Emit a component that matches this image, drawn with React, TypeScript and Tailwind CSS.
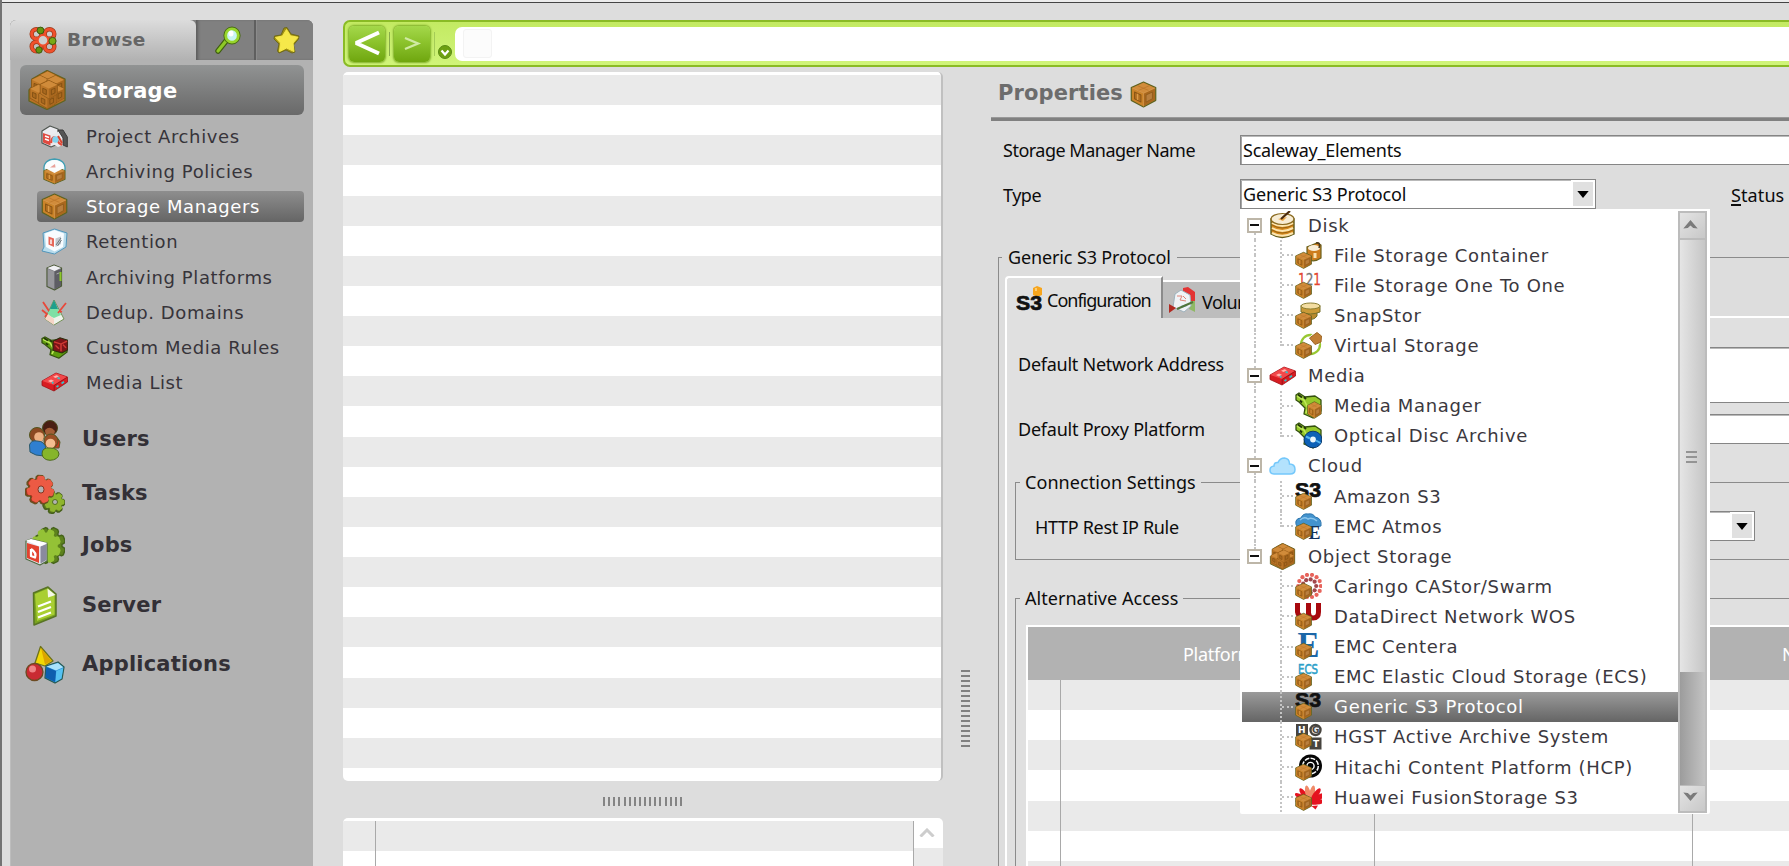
import React from "react";

type IconProps = { className?: string };

const Cube = () => (
  <g strokeLinejoin="round">
    <path d="M13 1 25 6.5V19L13 25.5 1 19V6.5Z" fill="#b87325" stroke="#5f6420" strokeWidth="1.2" />
    <path d="M13 1.8 24.3 6.8 13 12 1.7 6.8Z" fill="#d18c3b" />
    <path d="M1.8 7.3 13 12.5V24.8L1.8 18.7Z" fill="#cb8429" />
    <path d="M24.2 7.3 13 12.5V24.8L24.2 18.7Z" fill="#a9681e" />
    <path d="M4.2 10.8 10.5 13.7V20.7L4.2 17.4Z" fill="#b06e20" stroke="#8a5515" strokeWidth="1" />
    <path d="M7.2 12.5V18.6" stroke="#dc9c48" strokeWidth="1.4" />
    <path d="M21.8 10.8 15.5 13.7V20.7L21.8 17.4Z" fill="#b97f3e" stroke="#8f5a1a" strokeWidth=".8" />
    <path d="M7 4.5 18.5 9.5M19 4.5 7.5 9.5" stroke="#b87328" strokeWidth=".7" />
    <path d="M1.7 6.8 13 12 24.3 6.8M13 12V25" fill="none" stroke="#dca258" strokeWidth=".6" />
  </g>
);

const Crate = ({ className = "size-[27px]" }: IconProps) => (
  <svg viewBox="0 0 26 26.5" className={className}><Cube /></svg>
);

const stack: [number, number][] = [[11.3, 0.3], [3.8, 4.6], [19.2, 4.6], [2.2, 13.6], [19.2, 13.6], [11, 19.2], [12.5, 9.5]];

const Crates = ({ className = "size-[27px]" }: IconProps) => (
  <svg viewBox="0 0 40 40" className={className} strokeLinejoin="round">
    <path d="M20 .5 38 9V30.500L20 39.500 2 31V20L5 17V9Z" fill="#b87024" stroke="#5f6420" strokeWidth="1.3" />
    {stack.map(([x, y]) => (
      <g key={`${x}-${y}`} transform={`translate(${x} ${y}) scale(.72 .76)`}>
        <path d="M13 1 25 6.5V19L13 25.5 1 19V6.5Z" fill="#bd7728" stroke="#8a5515" strokeWidth="1" />
        <path d="M13 1.500 24.500 6.800 13 12 1.500 6.800Z" fill="#d08b3a" />
        <path d="M24.500 7.300 13 12.500V25L24.500 18.800Z" fill="#a8671e" />
        <path d="M4.500 11.500 9.500 13.500V20L4.500 17.500ZM21.500 11.500 16.500 13.500V20L21.500 17.500Z" fill="#a9691f" stroke="#7d4c11" strokeWidth="1.100" />
      </g>
    ))}
  </svg>
);

/** Object icon with a small crate laid over its lower left corner. */
const WithCrate = ({ children }: { children?: React.ReactNode }) => (
  <svg viewBox="0 0 27 27" className="size-[27px]">
    {children}
    <g transform="translate(0 9.6) scale(.66)"><Cube /></g>
  </svg>
);

const S3Text = ({ y = 14, fill = "#111" }: { y?: number; fill?: string }) => (
  <text x="0" y={y} fontFamily="Liberation Sans" fontWeight="700" fontSize="19.5" textLength="26" lengthAdjust="spacingAndGlyphs" fill={fill} stroke={fill} strokeWidth=".7">S3</text>
);

const ProjectArchives = () => (
  <svg viewBox="0 0 27 24" className="h-6 w-[27px]" strokeLinejoin="round">
    <path d="M9 1 17 4V19L10 22 1 18V6Z" fill="#ececf0" stroke="#4f5550" strokeWidth="1.2" />
    <path d="M2 8 9.5 10.5V20.5L2 17.5Z" fill="#e04a40" />
    <path d="M4 11 8 12.5M4 14 8 15.5" stroke="#fff" strokeWidth="1.4" />
    <path d="M10 10 19 6 26 11V22L22 20 17 22 10 18Z" fill="#e9e9ec" />
    <path d="M17 5 22 5 26.3 12V22L22 20V13Z" fill="#555" stroke="#3a3a3a" />
    <path d="M10 18C11 11 14 10 18 18L21 20" stroke="#e44a3a" strokeWidth="2.2" fill="none" />
    <circle cx="14.5" cy="14.5" r="3.2" fill="#7fd3ef" />
    <path d="M17 11 21 18" stroke="#d8442f" strokeWidth="2" />
  </svg>
);

const ArchivingPolicies = () => (
  <svg viewBox="0 0 27 27" className="size-[27px]" strokeLinejoin="round">
    <path d="M3 12Q2 2 13.500 1 25 2 24 12L20 16H7Z" fill="#e4f5fa" stroke="#3f9db2" strokeWidth="1.300" />
    <g transform="translate(2 8) scale(.88 .7)"><Cube /></g>
    <path d="M4 10Q4 3 13.500 2 23 3 23 10L13.500 15Z" fill="#fafcfd" />
    <path d="M9 9.500 14 6 14.500 9.500Z" fill="#e9a19a" />
  </svg>
);

const Retention = () => (
  <svg viewBox="0 0 27 27" className="size-[27px]" strokeLinejoin="round">
    <path d="M13.5 1 26 5 25 19 13.5 26 1 23 3 19 2 5Z" fill="#b9dcec" stroke="#5296bb" strokeWidth="1" />
    <path d="M13.5 2 23 5.5 22 19 13.5 23.5 5 19 4 5.5Z" fill="#f8fcff" />
    <path d="M7.5 8.5 13 10.5V19L7.5 16.5Z" fill="#e6685a" />
    <path d="M10 11.5V16" stroke="#fff" strokeWidth="1.4" />
    <path d="M14.5 10.5 20 8.5V16L14.5 19Z" fill="#c3c9cf" />
    <path d="M15 17 20 10M16.5 18 20.5 12" stroke="#6e7a80" />
  </svg>
);

const Platforms = () => (
  <svg viewBox="0 0 27 27" className="size-[27px]" strokeLinejoin="round">
    <path d="M13 1 20.5 4V22L13.5 26 6 22.5V4Z" fill="#7d7d82" stroke="#4b5a36" strokeWidth="1.2" />
    <path d="M13 1.5 20 4 13.5 7 6.5 4Z" fill="#f1f1f4" />
    <path d="M6.7 5 13.5 7.6V25L6.7 22Z" fill="#97979c" />
    <path d="M13.5 7.6 20 5V21.7L13.5 25.2Z" fill="#5d5d64" />
    <path d="M15.5 10 18.5 8.8" stroke="#a9a9a9" />
    <path d="M19.5 8V17" stroke="#8cc82a" strokeWidth="2" />
  </svg>
);

const Dedup = () => (
  <svg viewBox="0 0 27 27" className="size-[27px]" strokeLinejoin="round">
    <path d="M13 1 23 20 13 26 4 20Z" fill="#eef3ea" stroke="#6b8a4c" strokeWidth=".9" />
    <path d="M13 1 8.5 11 17.5 11Z" fill="#1f9f8c" />
    <path d="M9 10 17 10 20 16 13 19 6 16Z" fill="#7fe0a5" />
    <path d="M4 20 7 15 13 20 13 26Z" fill="#f6d5c6" />
    <path d="M2 3 8 12M1 11 6 15 4 18M25 4 17 14M18 12 21 13" stroke="#e8483a" strokeWidth="1.8" fill="none" />
  </svg>
);

const Serpent = ({ dark = false }: { dark?: boolean }) => (
  <g strokeLinejoin="round">
    <path d="M1 3 4 1 10 5 20 4 26 8V19L18 26 9 22 10 16 4 10 1 8Z" fill={dark ? "#5f9d0e" : "#96c92b"} stroke="#33500f" strokeWidth="1.3" />
    <path d="M2 4 9 8 13 16 11 21" stroke="#bfe85a" strokeWidth="1.6" fill="none" />
    <path d="M3 2.500 7 5.500M5 8.500 7 10.500M9 5 11 7" stroke="#22330c" strokeWidth="1.8" />
  </g>
);

const CustomRules = () => (
  <svg viewBox="0 0 27 27" className="h-[23px] w-[27px]" preserveAspectRatio="none">
    <Serpent dark />
    <path d="M12 6 19 2 27 5V16L21 20 12 17Z" fill="#7b1418" stroke="#2a2e0c" strokeWidth="1.2" />
    <path d="M13 7 20 9.500 26 6M20 10V18M14.5 11 18 15M22 10 25 14" stroke="#d23a34" strokeWidth="1.5" fill="none" />
  </svg>
);

const Cassette = () => (
  <svg viewBox="0 0 27 20" className="h-5 w-[27px]" strokeLinejoin="round">
    <path d="M1 9 15 1 26.5 5V10L13 19 1 13.5Z" fill="#d81c22" stroke="#a01217" strokeWidth=".8" />
    <path d="M1.3 9 15 1.3 26 5 13 13Z" fill="#f2484a" />
    <path d="M12 4.7 15.5 3.2 18 4.2 14.5 6ZM7 9 10 7.5 13 8.8 10 10.4Z" fill="#ffb5ae" />
    <path d="M16.5 5.8 18.8 6.6M11 11.2 12.5 10.3M15.5 15 17.5 13.6M20.5 11.5 23 9.8" stroke="#31c5ce" strokeWidth="1.7" />
    <path d="M13.2 13.4V18.6M13.2 13.4 26 5.4" stroke="#8f1014" strokeWidth=".8" />
  </svg>
);

const Users = () => (
  <svg viewBox="0 0 34 41" className="h-[41px] w-[34px]">
    <circle cx="22" cy="8" r="7.5" fill="#4a1f13" stroke="#4b4a1d" />
    <path d="M17 10Q22 5 27 11 26 17 21 17Q17 15 17 10Z" fill="#a45e37" />
    <path d="M17 20Q29 13 32 22L31 28 20 28Z" fill="#c03a22" stroke="#5b5a24" />
    <circle cx="9" cy="15" r="7.5" fill="#8c4a22" stroke="#54551f" />
    <circle cx="11" cy="17" r="4.8" fill="#edb183" />
    <path d="M1.500 25Q3 20 9 21 17 21 18 29L16 36Q7 36 2 32Z" fill="#2f7fd0" stroke="#2d5a6d" />
    <circle cx="23" cy="21" r="7" fill="#9a4f26" stroke="#54551f" />
    <circle cx="22.5" cy="23.500" r="4.800" fill="#f3bd90" />
    <path d="M14 34Q14 27 22 28 30 28 31 34 30 40 22 40.300 15 40 14 34Z" fill="#86b52b" stroke="#4c6a1c" />
  </svg>
);

const gearPath = (cx: number, cy: number, r: number, teeth: number, turn = 0) => {
  const pts: string[] = [];
  for (let i = 0; i < teeth; i++) {
    const a = ((i + turn) / teeth) * Math.PI * 2;
    const s = (Math.PI * 2) / teeth;
    [[-0.4, 0.78], [-0.32, 0.93], [-0.18, 1], [0.18, 1], [0.32, 0.93], [0.4, 0.78]].forEach(([o, k]) => {
      pts.push(`${(cx + Math.cos(a + o * s) * r * k).toFixed(1)} ${(cy + Math.sin(a + o * s) * r * k).toFixed(1)}`);
    });
  }
  return `M${pts.join("L")}Z`;
};

const Tasks = () => (
  <svg viewBox="0 0 40 40" className="size-10" strokeLinejoin="round">
    <path d={gearPath(28.5, 28.5, 11, 7)} fill="#5e7a1a" stroke="#46601a" strokeWidth="1.500" />
    <path d={gearPath(29.5, 28, 10, 7)} fill="#8fb52e" />
    <circle cx="30" cy="28" r="2.500" fill="#b2b2b2" stroke="#52701b" />
    <path d={gearPath(14.5, 16, 14.5, 7, 0.3)} fill="#a3321f" stroke="#68501e" strokeWidth="1.500" />
    <path d={gearPath(15.5, 15.5, 13.8, 7, 0.3)} fill="#ec5a44" />
    <ellipse cx="16" cy="15.5" rx="3" ry="3.600" fill="#b2b2b2" stroke="#8a3421" />
  </svg>
);

const Jobs = () => (
  <svg viewBox="0 0 40 40" className="size-10" strokeLinejoin="round">
    <path d={gearPath(24, 19.500, 18.500, 8, 0.5)} fill="#5d821d" stroke="#45631a" strokeWidth="1.500" transform="translate(4 0) scale(.86 1)" />
    <path d={gearPath(21, 20, 17.5, 8, 0.5)} fill="#94c236" transform="translate(3 0) scale(.86 1)" />
    <path d="M1 15 6 13 22 17 22 35 15 39 1 33Z" fill="#e6e6ee" stroke="#4f6a40" strokeWidth="1.2" />
    <path d="M2 17 14 20.500V37L2 32Z" fill="#e2432f" />
    <path d="M6 23V30L10 31.500Q12 27 6 23" stroke="#fff" strokeWidth="2.300" fill="none" />
    <path d="M15.500 20.500 21.500 18V34L15.500 37.500Z" fill="#8a8a9e" />
    <path d="M1 14.500 6 13 22.500 17 15 20.500Z" fill="#fff" />
  </svg>
);

const Server = () => (
  <svg viewBox="0 0 26 40" className="h-10 w-[26px]" strokeLinejoin="round">
    <path d="M1.500 7 16 1 24 8V30L2 39Z" fill="#7ba51f" stroke="#587425" strokeWidth="1.500" />
    <path d="M3 8 15.500 2.800 22.500 10V28.500L5 35Z" fill="#a9cf33" />
    <path d="M15.500 2.500 16 11.500 23.500 9Z" fill="#f5f8e8" />
    <path d="M6 20.500 19 15.500M6 26 19 21M6 31.500 19 26.500" stroke="#fff" strokeWidth="2.200" />
  </svg>
);

const Applications = () => (
  <svg viewBox="0 0 40 40" className="size-10" strokeLinejoin="round">
    <path d="M15.500 1.500 28 16 20 21 10 18Z" fill="#f2d705" stroke="#6d721c" strokeWidth="1.300" />
    <path d="M16 3 26.500 16 20 19.500Z" fill="#dca400" />
    <path d="M21 21 33 17 39 22 37 34 30 38 20 33Z" fill="#2b8fd6" stroke="#275a52" strokeWidth="1.300" />
    <path d="M21.500 21.500 33 18 38.300 22.300 31 25.500Z" fill="#a9e3fb" />
    <path d="M31.300 26 38.300 23 36.500 33.500 30.300 37Z" fill="#56c2f2" />
    <path d="M21.300 22 31 26 30 37 20.500 32.500Z" fill="#0d5eae" />
    <circle cx="9.500" cy="27" r="8.500" fill="#c92b33" stroke="#6c4a22" strokeWidth="1.300" />
    <circle cx="7.500" cy="24" r="3.500" fill="#ee8386" />
  </svg>
);

const BrowseIcon = () => (
  <svg viewBox="0 0 28 28" className="size-7">
    {["#9c3a1a", "#f0502c"].map((c, i) => (
      <g key={c} fill="none" stroke={c} strokeWidth={i ? 3 : 4.4}>
        <circle cx="7.500" cy="8" r="4.800" /><circle cx="20.500" cy="8" r="4.800" />
        <circle cx="7.500" cy="20.500" r="4.800" /><circle cx="20.500" cy="20.500" r="4.800" />
      </g>
    ))}
    <circle cx="14" cy="14.300" r="5" fill="#cfcfcf" stroke="#f0502c" strokeWidth="1.400" />
    <circle cx="11.500" cy="4.500" r="3.400" fill="#63950f" stroke="#3c5a10" /><circle cx="23.500" cy="15" r="3.600" fill="#79ab17" stroke="#3c5a10" /><circle cx="10" cy="24" r="3.200" fill="#63950f" stroke="#3c5a10" />
  </svg>
);

const SearchIcon = () => (
  <svg viewBox="0 0 26 28" className="h-7 w-[26px]">
    <path d="M11 15 3 25" stroke="#3f5d10" strokeWidth="5.500" strokeLinecap="round" />
    <path d="M11 15 3 25" stroke="#8fc928" strokeWidth="3.200" strokeLinecap="round" />
    <ellipse cx="17" cy="9.500" rx="6.300" ry="6.700" fill="#d2f6f4" stroke="#466810" strokeWidth="4.600" />
    <ellipse cx="17" cy="9.500" rx="6.300" ry="6.700" fill="#c8f4f2" stroke="#98d52c" strokeWidth="2.800" />
    <ellipse cx="16" cy="7.500" rx="2.500" ry="3" fill="#fff" />
  </svg>
);

const StarIcon = () => (
  <svg viewBox="0 0 27 27" className="size-[27px]" strokeLinejoin="round">
    <path d="M11 1 14 .500 18 7 26 9 25.500 12 20.500 18 22 25 19 26 13 23 6 26 4.500 24 6 17 1 12 1.500 9 8 8Z" fill="#a39313" stroke="#6f6a1a" />
    <path d="M13.500 2.500 17.500 8.800 25 10.300 20 16 21 24.500 13.500 21 6.500 24.500 7.500 16 2.500 10.500 9.500 9Z" fill="#f6e84a" stroke="#f6e84a" strokeWidth="1" />
  </svg>
);

const DiskIcon = () => (
  <svg viewBox="0 0 27 28" className="h-7 w-[27px]">
    <path d="M2 8V23Q13 30 25 23V8Z" fill="#d78a1d" stroke="#5c5a1e" strokeWidth="1.400" />
    <path d="M3 12Q13 18 24 12M3 17Q13 23 24 17M3 22Q13 27.500 24 22" stroke="#fbe5b0" strokeWidth="2" fill="none" />
    <path d="M3 14Q13 20 24 14M3 19Q13 25 24 19" stroke="#8a5a10" strokeWidth=".8" fill="none" />
    <ellipse cx="13.500" cy="8" rx="11.500" ry="5.500" fill="#f7ecd4" stroke="#8a6a20" strokeWidth="1.200" />
    <path d="M9 8 18 6 14 10Z" fill="#eaa545" /><path d="M12 8 21 0" stroke="#4b2a0c" strokeWidth="2.200" />
  </svg>
);

const CloudIcon = () => (
  <svg viewBox="0 0 27 18" className="h-[18px] w-[27px]">
    <path d="M5 17Q1 17 1 13 1 9.500 5 9 5 5 9 5.500 11 1 15.500 1 20.500 1.500 20.500 7 26 7 26 12.500 26 17 21 17Z" fill="#b3e2fd" stroke="#74c8fb" strokeWidth="1.500" />
  </svg>
);

const FileContainer = () => (
  <WithCrate>
    <path d="M12 5V17Q19 21 26 16V3L22 1 17 3Z" fill="#cd7d1d" stroke="#6a611e" strokeWidth="1.200" />
    <ellipse cx="19" cy="6" rx="6" ry="3" fill="#f8eed8" /><path d="M21 1Q26 0 24 6" stroke="#4d3a1c" strokeWidth="1.600" fill="none" />
    <path d="M20 11V16" stroke="#fae1ad" strokeWidth="3" />
  </WithCrate>
);
const OneToOne = () => (
  <WithCrate>
    <text x="3" y="12.500" fontFamily="DejaVu Sans" fontSize="15.500" fill="#e3452f" stroke="#e3452f" strokeWidth=".3" textLength="23" lengthAdjust="spacingAndGlyphs"><tspan>1</tspan><tspan fill="#777" stroke="#777">2</tspan><tspan>1</tspan></text>
  </WithCrate>
);
const SnapStor = () => (
  <WithCrate>
    <path d="M11 8V15Q18 20 22 14V9Z" fill="#b98a2d" stroke="#6d6825" />
    <path d="M6 3.500V10Q15 14 25 10V3.500Z" fill="#ca9a38" stroke="#77712a" /><ellipse cx="15.500" cy="4" rx="9.500" ry="3" fill="#f3dda2" stroke="#8c8033" />
  </WithCrate>
);
const Virtual = () => (
  <WithCrate>
    <circle cx="15.500" cy="12.500" r="9.500" fill="none" stroke="#98c832" strokeWidth="2.300" />
    <path d="M12 7 20 0 27 4 24 13 17 13Z" fill="#fff" /><path d="M14.500 6 22 .500 26.500 4 26 10 20 12.500Z" fill="#c17f35" stroke="#9d6726" />
  </WithCrate>
);
const MediaManager = () => (
  <svg viewBox="0 0 27 27" className="size-[27px]"><Serpent /><g transform="translate(12 9) scale(.57 .68)"><Cube /></g></svg>
);
const Optical = () => (
  <svg viewBox="0 0 27 27" className="size-[27px]"><Serpent />
    <ellipse cx="18" cy="17.500" rx="9" ry="8.300" fill="#0d61b7" stroke="#0b3a6b" /><path d="M11 14.500 15 16.500M21 18.500 25.500 21" stroke="#55b5ee" strokeWidth="2" /><circle cx="18" cy="17.500" r="2.900" fill="#eaf6fb" /></svg>
);
const AmazonS3 = () => <WithCrate><S3Text /></WithCrate>;
const Atmos = () => (
  <WithCrate>
    <path d="M4 14Q0 13 1 8 2 5 6 5 8 0 13 1 18 0 20 4 27 5 26 13L20 14Z" fill="#4393ce" stroke="#2d75ad" />
    <path d="M5 7Q9 3 13 6 17 4 22 8" stroke="#8cc6ed" fill="none" strokeWidth="1.500" />
    <text x="13.500" y="26" fontFamily="Liberation Serif" fontWeight="700" fontSize="18" fill="#12325c">E</text>
  </WithCrate>
);
const Caringo = () => {
  const dots: [number, number, string][] = [];
  for (let i = 0; i < 14; i++) dots.push([14.500 + Math.cos((i / 14) * 6.283) * 11.300, 13 + Math.sin((i / 14) * 6.283) * 11.300, "#e7635b"]);
  for (let i = 0; i < 9; i++) dots.push([14.500 + Math.cos((i / 9) * 6.283) * 6.700, 13 + Math.sin((i / 9) * 6.283) * 6.700, "#a2474c"]);
  return <WithCrate>{dots.map(([x, y, c], i) => <circle key={i} cx={x} cy={y} r="2.100" fill={c} />)}</WithCrate>;
};
const Wos = () => (
  <WithCrate><path d="M2.500 0V9Q3 14 10 14M13.500 0V13M13.500 10Q14 15 18 15 23.500 15 23.500 9V0" stroke="#a8090e" strokeWidth="5" fill="none" /></WithCrate>
);
const Centera = () => (
  <WithCrate><text x="2.500" y="24" fontFamily="Liberation Serif" fontWeight="700" fontSize="35" textLength="22" lengthAdjust="spacingAndGlyphs" fill="#1c67a8">E</text></WithCrate>
);
const Ecs = () => (
  <WithCrate><text x="3" y="10.500" fontFamily="DejaVu Sans" fontSize="13.500" textLength="20" lengthAdjust="spacingAndGlyphs" fill="#2d9fc9" stroke="#2d9fc9" strokeWidth=".6">ECS</text></WithCrate>
);
const Hgst = () => (
  <WithCrate>
    <rect x="1" y="1" width="12" height="12" fill="#47443f" /><circle cx="20.500" cy="7" r="5" fill="#eee" stroke="#47443f" strokeWidth="2.400" /><rect x="14.500" y="14.500" width="12" height="12" fill="#47443f" />
    <g fontFamily="DejaVu Sans" fontWeight="700" fontSize="9"><text x="3" y="10" fill="#fff">H</text><text x="17" y="10" fill="#47443f">G</text><text x="18" y="24" fill="#fff">T</text></g>
  </WithCrate>
);
const Hitachi = () => (
  <WithCrate>
    <circle cx="15.500" cy="12" r="11.500" fill="#050505" /><circle cx="15.500" cy="12" r="7.800" fill="none" stroke="#fff" strokeWidth="1.500" strokeDasharray="4.800 1.300" /><circle cx="15.500" cy="12" r="3.600" fill="#050505" stroke="#fff" strokeWidth="1.400" />
  </WithCrate>
);
const Huawei = () => (
  <WithCrate>
    {[-82, -58, -35, -12, 12, 35, 58, 82].map((a) => <ellipse key={a} cx="15" cy="8" rx="2.600" ry="7.800" transform={`rotate(${a} 15 19) translate(${Math.abs(a) > 70 ? "0 4" : "0 1"})`} fill={Math.abs(a) < 20 ? "#f08a68" : "#e5121f"} />)}
    <path d="M16.500 22 23 21.500 20.500 25.500Z" fill="#e5121f" />
  </WithCrate>
);
const ConfigS3 = () => (
  <svg viewBox="0 0 27 27" className="size-[27px]">
    <path d="M17 3 21 1 26 3V10L21 12 17 10Z" fill="#f7a51c" /><path d="M20 3V6" stroke="#fff3c7" />
    <S3Text y={25} />
  </svg>
);
const Volumes = () => (
  <svg viewBox="0 0 27 27" className="size-[27px]">
    <path d="M14 1 19 0 26 5V15H14Z" fill="#e33434" /><path d="M22 14 26 14V25L20 22Z" fill="#8fb965" />
    <path d="M6 7 12 3 21 8 22 19 15 25 4 20Z" fill="#f0f3f6" stroke="#9fb3bd" />
    <path d="M8 9 13 9 11 13 17 14M14 9 17 12" stroke="#e08274" fill="none" /><path d="M12 20 18 18" stroke="#7fb8d8" strokeWidth="2" />
    <path d="M0 17 7 21 0 26Z" fill="#b22a22" /><path d="M8 22 24 15" stroke="#52753b" strokeWidth="2" />
  </svg>
);

const subItems: [string, React.FC<IconProps>][] = [
  ["Project Archives", ProjectArchives],
  ["Archiving Policies", ArchivingPolicies],
  ["Storage Managers", Crate],
  ["Retention", Retention],
  ["Archiving Platforms", Platforms],
  ["Dedup. Domains", Dedup],
  ["Custom Media Rules", CustomRules],
  ["Media List", Cassette],
];

const sections: [string, React.FC, string][] = [
  ["Users", Users, "h-[54px]"],
  ["Tasks", Tasks, "h-[54px]"],
  ["Jobs", Jobs, "h-[50px]"],
  ["Server", Server, "h-[70px]"],
  ["Applications", Applications, "h-[47px]"],
];

const Sidebar = () => (
  <aside className="flex h-[846px] w-[303px] shrink-0 flex-col rounded-t-[6px] bg-[#b2b2b2] font-['DejaVu_Sans',sans-serif] shadow-[inset_1px_0_0_#bdbdbd]">
    <div className="flex h-10 rounded-t-[6px] bg-[#808080]">
      <div className="flex w-[186px] items-center gap-[10px] rounded-t-[6px] bg-linear-to-b from-[#dcdcdc] to-[#b2b2b2] pl-[19px]">
        <BrowseIcon />
        <span className="text-[18.5px] font-bold tracking-[0.35px] text-[#666]">Browse</span>
      </div>
      <div className="flex grow rounded-tr-[6px] bg-[#808080] shadow-[inset_3px_0_3px_-1px_#5c5c5c]">
        <div className="flex w-[60px] items-center justify-center border-r-2 border-[#5f5f5f] pl-[6px]"><SearchIcon /></div>
        <div className="flex grow items-center justify-center border-l border-[#8b8b8b] pl-[2px]"><StarIcon /></div>
      </div>
    </div>
    <div className="mt-[5px] ml-[10px] flex h-[50px] w-[284px] items-center rounded-[6px] bg-linear-to-b from-[#919393] to-[#696969] pl-[7px]">
      <Crates className="size-10" />
      <span className="mt-[3px] ml-[15px] text-[21px] font-bold tracking-[0.3px] text-white">Storage</span>
    </div>
    <ul className="mt-[4px] flex flex-col pl-[27px]">
      {subItems.map(([label, Icon], i) => (
        <li key={label} className="flex h-[35.130px] items-center">
          <div className={"flex h-[31px] w-[267px] items-center rounded-[4px] pl-[4px] " + (i === 2 ? "bg-linear-to-b from-[#8e8e8e] to-[#656565] text-white" : "text-[#37343a]")}>
            <span className="flex w-[27px] justify-center"><Icon /></span>
            <span className="ml-[18px] text-[18px] tracking-[0.6px] whitespace-nowrap">{label}</span>
          </div>
        </li>
      ))}
    </ul>
    <ul className="mt-[13px] flex flex-col pl-[15px]">
      {sections.map(([label, Icon, h]) => (
        <li key={label} className={"flex items-center " + h}>
          <span className="flex w-10 justify-center"><Icon /></span>
          <span className="ml-[17px] text-[21px] font-bold tracking-[0.2px] text-[#333036]">{label}</span>
        </li>
      ))}
    </ul>
  </aside>
);

const Toolbar = () => (
  <div className="flex h-[47px] shrink-0 items-center rounded-l-[7px] border-2 border-r-0 border-[#8abb25] bg-linear-to-b from-[#c3ea62] to-[#d0f47a]">
    <div className="ml-[4px] flex h-[36px] w-[36px] items-center justify-center rounded-[5px] bg-linear-to-b from-[#a4d84a] via-[#8cc32c] via-45% to-[#6fa60d] shadow-[0_0_2px_1px_#7fae28]">
      <svg viewBox="0 0 30 30" className="size-[30px]"><path d="M27 3.500 4 14 27 24.500" stroke="#fff" strokeWidth="4" fill="none" strokeLinejoin="bevel" /></svg>
    </div>
    <div className="ml-[4px] h-6 w-px bg-[#88aa4b]" />
    <div className="ml-[4px] flex h-[36px] w-[36px] items-center justify-center rounded-[5px] bg-linear-to-b from-[#a4d84a] via-[#8cc32c] via-45% to-[#6fa60d] shadow-[0_0_2px_1px_#7fae28]">
      <svg viewBox="0 0 30 30" className="size-[30px]"><path d="M8 9 21 14.500 8 20" stroke="#d0eaa2" strokeWidth="2.400" fill="none" /></svg>
    </div>
    <div className="ml-[4px] h-6 w-px bg-[#a5cc58]" />
    <svg viewBox="0 0 14 14" className="mt-[17px] ml-[3px] size-[14px]"><circle cx="7" cy="7" r="6.500" fill="#6da012" stroke="#5a8a14" /><path d="M3.500 5.500 7 9.500 10.500 5.500" stroke="#fff" strokeWidth="2.200" fill="none" /></svg>
    <div className="ml-[3px] flex h-[34px] grow items-center rounded-l-[7px] bg-white pl-2">
      <div className="size-[29px] rounded-[3px] border border-[#f3f3f3] bg-[#fcfcfc]" />
    </div>
  </div>
);

const Stripes = ({ count }: { count: number }) => (
  <>
    {Array.from({ length: count }, (_, i) => (
      <div key={i} className={"h-[30.130px] shrink-0 " + (i % 2 ? "bg-white" : "bg-[#eaeaea]")} />
    ))}
  </>
);

const BrowserLists = () => (
  <div className="flex w-[600px] shrink-0 flex-col pt-[5px]">
    <div className="flex h-[709px] shrink-0 flex-col overflow-hidden rounded-[5px] border-r-2 border-[#c0c0c0] bg-white pt-[3px]">
      <Stripes count={23} />
    </div>
    <div className="flex h-[37px] shrink-0 items-center gap-[3.130px] pt-[4px] pl-[260px]">
      {Array.from({ length: 16 }, (_, i) => <div key={i} className="h-[9px] w-[2px] bg-[#858585]" />)}
    </div>
    <div className="flex h-[48px] shrink-0 overflow-hidden rounded-t-[5px] bg-white pt-[3px]">
      <div className="flex w-8 flex-col"><Stripes count={2} /></div>
      <div className="flex grow flex-col border-x border-[#a9a9a9]"><Stripes count={2} /></div>
      <div className="flex w-[29px] flex-col">
        <div className="flex h-[27px] items-center justify-center pr-[4px] pb-[4px]">
          <svg viewBox="0 0 16 9" className="h-[9px] w-4"><path d="M1.500 8.500 8 2 14.500 8.500" stroke="#cdcdcd" strokeWidth="3" fill="none" /></svg>
        </div>
        <div className="grow bg-[#eaeaea]" />
      </div>
    </div>
  </div>
);

const ComboArrow = () => (
  <div className="flex h-full w-[24px] items-center justify-center border-2 border-white bg-[#e0e0e0]">
    <svg viewBox="0 0 13 8" className="mt-[1px] h-[7px] w-[12px]"><path d="M0 0H13L6.500 8Z" fill="#000" /></svg>
  </div>
);

const box = "border border-[#858585] bg-white shadow-[inset_0_1px_0_#b9b9b9,inset_1px_0_0_#a5a5a5]";

const Properties = () => (
  <div className="flex w-[830px] shrink-0 flex-col font-['Noto_Sans',sans-serif] text-[18px] leading-[30px] whitespace-nowrap text-[#0c0c0c]">
    <div className="flex h-[50px] shrink-0 items-center pt-px pl-[7px] font-['DejaVu_Sans',sans-serif]">
      <span className="text-[21px] font-bold tracking-[0.120px] text-[#6c6c6c]">Properties</span>
      <Crate className="mt-1 ml-[7px] size-[27px]" />
    </div>
    <div className="h-[4px] shrink-0 bg-[#808080] shadow-[inset_0_1px_0_#999]" />
    <div className="mt-[14px] flex h-[30px] shrink-0 items-center pl-[12px]">
      <span className="w-[237px] tracking-[-0.500px]">Storage Manager Name</span>
      <div className={"flex h-[30px] grow items-center pl-[2px] " + box}><span className="tracking-[-0.250px]">Scaleway_Elements</span></div>
    </div>
    <div className="mt-[14px] flex h-[30px] shrink-0 items-center pl-[12px]">
      <span className="w-[237px] pt-[2px] tracking-[-0.500px]">Type</span>
      <div className={"flex h-[30px] w-[356px] items-center justify-between pl-[2px] " + box}>
        <span className="tracking-[-0.100px]">Generic S3 Protocol</span>
        <ComboArrow />
      </div>
      <span className="ml-[135px] pt-[2px] tracking-[0.100px]"><span className="underline decoration-2 underline-offset-2">S</span>tatus</span>
    </div>
    <fieldset className="mt-[33px] ml-[7px] h-[640px] w-[900px] min-w-0 shrink-0 border border-[#8b8b8b] pl-[6px]">
      <legend className="ml-[-3px] px-[6px] tracking-[-0.130px]">Generic S3 Protocol</legend>
      <div className="mt-[4px] flex h-[42px]">
        <div className="flex w-[158px] items-center rounded-tl-[4px] border-t-2 border-r-2 border-l-2 border-t-white border-r-[#8b8b8b] border-l-white bg-[#e0e0e0] pl-[9px]">
          <ConfigS3 />
          <span className="ml-[4px] pt-1 tracking-[-1px]">Configuration</span>
        </div>
        <div className="mt-[4px] flex w-[200px] items-center border-t-2 border-white bg-[#bdbdbd] pl-[6px]">
          <Volumes />
          <span className="ml-[6px] pt-1 tracking-[-0.500px]">Volumes</span>
        </div>
        <div className="grow border-b-2 border-white" />
      </div>
      <div className="flex h-[560px] flex-col border-l-2 border-white bg-[#e0e0e0] pl-[8px]">
        <div className="mt-[29px] flex h-[56px] shrink-0 pl-[3px]">
          <span className="w-[232px] pt-[2px] tracking-[-0.250px]">Default Network Address</span>
          <div className={"grow " + box} />
        </div>
        <div className="mt-[11px] flex h-[30px] shrink-0 items-center pl-[3px]">
          <span className="w-[232px] tracking-[-0.230px]">Default Proxy Platform</span>
          <div className={"h-full grow " + box} />
        </div>
        <fieldset className="mt-[23px] h-[93px] min-w-0 shrink-0 border border-[#8b8b8b]">
          <legend className="ml-[4px] px-[5px] tracking-[0.060px]">Connection Settings</legend>
          <div className="mt-[14px] flex h-[30px] items-center pl-[19px]">
            <span className="w-[225px] pt-[2px] tracking-[-0.320px]">HTTP Rest IP Rule</span>
            <div className={"flex h-[30px] w-[495px] justify-end " + box}><ComboArrow /></div>
          </div>
        </fieldset>
        <fieldset className="mt-[23px] h-[300px] min-w-0 shrink-0 border border-[#8b8b8b] pl-[10px]">
          <legend className="-ml-[6px] px-[5px] tracking-[0.030px]">Alternative Access</legend>
          <div className="mt-[12px] flex flex-col border-t-2 border-l-2 border-white">
            <div className="flex h-[53px] items-center bg-[#b2b2b2] text-white">
              <span className="w-[347px] shrink-0 pl-[155px] tracking-[-0.300px]">Platform</span>
              <span className="shrink-0 pl-[407px] tracking-[-0.300px]">Network Address</span>
            </div>
            <div className="grid grid-cols-[33px_314px_318px_1fr]">
              {[0, 1, 2, 3].map((c) => (
                <div key={c} className={"flex flex-col " + (c < 3 ? "border-r border-[#a9a9a9]" : "")}><Stripes count={7} /></div>
              ))}
            </div>
          </div>
        </fieldset>
      </div>
    </fieldset>
  </div>
);

type Row = { label: string; icon: React.FC<IconProps>; child?: boolean; last?: boolean };
const tree: Row[] = [
  { label: "Disk", icon: DiskIcon },
  { label: "File Storage Container", icon: FileContainer, child: true },
  { label: "File Storage One To One", icon: OneToOne, child: true },
  { label: "SnapStor", icon: SnapStor, child: true },
  { label: "Virtual Storage", icon: Virtual, child: true, last: true },
  { label: "Media", icon: Cassette },
  { label: "Media Manager", icon: MediaManager, child: true },
  { label: "Optical Disc Archive", icon: Optical, child: true, last: true },
  { label: "Cloud", icon: CloudIcon },
  { label: "Amazon S3", icon: AmazonS3, child: true },
  { label: "EMC Atmos", icon: Atmos, child: true, last: true },
  { label: "Object Storage", icon: Crates },
  { label: "Caringo CAStor/Swarm", icon: Caringo, child: true },
  { label: "DataDirect Network WOS", icon: Wos, child: true },
  { label: "EMC Centera", icon: Centera, child: true },
  { label: "EMC Elastic Cloud Storage (ECS)", icon: Ecs, child: true },
  { label: "Generic S3 Protocol", icon: AmazonS3, child: true },
  { label: "HGST Active Archive System", icon: Hgst, child: true },
  { label: "Hitachi Content Platform (HCP)", icon: Hitachi, child: true },
  { label: "Huawei FusionStorage S3", icon: Huawei, child: true },
];

const ScrollBar = () => (
  <div className="mt-[2px] mr-[3px] flex h-[602px] w-[29px] flex-col border-2 border-[#bcbcbc]">
    <div className="flex h-[27px] items-center justify-center border-b-2 border-[#bcbcbc] bg-linear-to-br from-[#e4e4e4] to-[#c8c8c8] pr-[4px] pb-[2px]">
      <svg viewBox="0 0 16 10" className="h-[9px] w-[15px]"><path d="M0 9.500 8 0 16 9.500 11 9 8 6 5 9Z" fill="#7b7b7b" /></svg>
    </div>
    <div className="flex h-[432px] flex-col items-center justify-center gap-[3px] bg-linear-to-r from-[#e5e5e5] to-[#c6c6c6] pt-[2px] pr-[2px]">
      <div className="h-[2px] w-[11px] bg-[#949494]" />
      <div className="h-[2px] w-[11px] bg-[#949494]" />
      <div className="h-[2px] w-[11px] bg-[#949494]" />
    </div>
    <div className="h-[113px] bg-linear-to-r from-[#9c9c9c] to-[#c3c3c3]" />
    <div className="flex grow items-center justify-center border-t border-[#bcbcbc] bg-linear-to-br from-[#e4e4e4] to-[#c8c8c8] pr-[4px] pb-[5px]">
      <svg viewBox="0 0 16 10" className="h-[9px] w-[15px]"><path d="M0 .500 8 10 16 .500 11 1 8 4 5 1Z" fill="#7b7b7b" /></svg>
    </div>
  </div>
);

const TypeMenu = () => (
  <div className="absolute top-[209px] left-[1240px] flex h-[605px] w-[470px] overflow-hidden rounded-b-[2px] bg-white font-['DejaVu_Sans',sans-serif] text-[18px] text-[#3b383e]">
    <div className="flex grow flex-col pt-[1px] pl-[2px]">
      {tree.map(({ label: text, icon: Icon, child, last }, i) => (
        <div key={text} className={"flex h-[30.120px] shrink-0 items-stretch " + (i === 16 ? "bg-linear-to-b from-[#9b9b9b] to-[#656565] text-white" : "")}>
          <div className="flex w-[25px] shrink-0 flex-col items-center">
            <div className={"w-px grow border-l-2 border-dotted " + (i > 0 && i < 12 ? "border-[#c4c4c4]" : "border-transparent")} />
            {!child && (
              <div className="flex size-[15px] shrink-0 items-center justify-center border-2 border-[#bdb6a8] bg-white"><div className="h-[2px] w-[9px] bg-[#111]" /></div>
            )}
            <div className={"w-px grow border-l-2 border-dotted " + (i < 11 ? "border-[#c4c4c4]" : "border-transparent")} />
          </div>
          {child && (
            <div className="flex w-[26px] shrink-0 pl-[13px]">
              <div className={"border-l-2 border-dotted border-[#c4c4c4] " + (last ? "h-4" : "h-full")} />
              <div className="h-4 w-[11px] border-b-2 border-dotted border-[#c4c4c4]" />
            </div>
          )}
          <div className="flex w-[30px] shrink-0 items-center justify-center"><Icon /></div>
          <span className="ml-[11px] self-center tracking-[0.680px] whitespace-nowrap">{text}</span>
        </div>
      ))}
    </div>
    <ScrollBar />
  </div>
);

export default function App() {
  return (
    <div className="relative flex h-[866px] w-[1789px] overflow-hidden border-l-2 border-[#737373] bg-[#ddd] pt-5 pl-2">
      <div className="absolute top-0 left-0 h-[3px] w-full border-b border-[#444] bg-[#ececec]" />
      <Sidebar />
      <main className="ml-[30px] flex w-[1446px] shrink-0 flex-col">
        <Toolbar />
        <div className="flex h-[799px] shrink-0">
          <BrowserLists />
          <div className="mt-[603px] ml-[18px] flex w-[30px] shrink-0 flex-col gap-[3px]">
            {Array.from({ length: 16 }, (_, i) => <div key={i} className="h-[2px] w-[9px] shrink-0 bg-[#808080]" />)}
          </div>
          <Properties />
        </div>
      </main>
      <div className="absolute inset-y-0 left-[-2px] w-0"><TypeMenu /></div>
    </div>
  );
}
